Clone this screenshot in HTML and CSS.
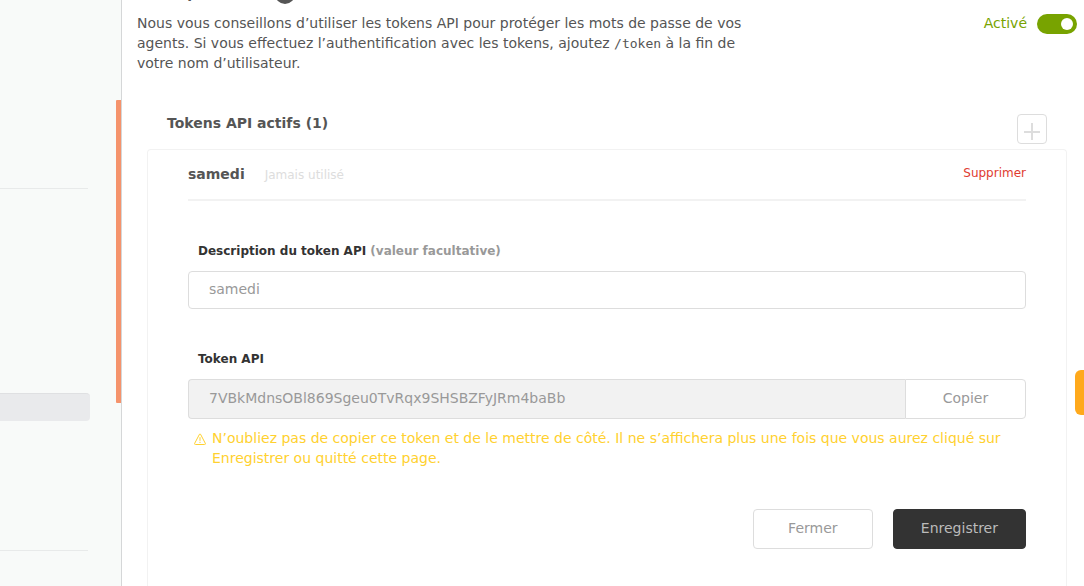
FILE: index.html
```html
<!DOCTYPE html>
<html lang="fr">
<head>
<meta charset="utf-8">
<title>Tokens API</title>
<link rel="stylesheet" href="styles.css">
</head>
<body>
<div class="shell">
  <aside class="sidebar">
    <div class="sidebar-nav">
      <div class="nav-group nav-first"></div>
      <div class="nav-group nav-main"><div class="nav-current"></div></div>
    </div>
    <div class="scroll-thumb"></div>
  </aside>
  <main class="content">
    <h2 class="section-title">Accès par token
      <svg class="info" viewBox="0 0 20 20" aria-hidden="true"><circle cx="10" cy="10" r="10"/></svg>
    </h2>
    <div class="intro">
      <p class="intro-text">Nous vous conseillons d’utiliser les tokens API pour protéger les mots de passe de vos agents. Si vous effectuez l’authentification avec les tokens, ajoutez <code>/token</code> à la fin de votre nom d’utilisateur.</p>
      <label class="switch">Activé <input class="switch-input" type="checkbox" checked></label>
    </div>
    <div class="list-head">
      <h3 class="list-title">Tokens API actifs (1)</h3>
      <button class="add" type="button" aria-label="Ajouter un token">
        <svg class="add-icon" viewBox="0 0 18 18" aria-hidden="true"><path d="M9 1v17M1 10h16"/></svg>
      </button>
    </div>
    <form class="card">
      <div class="card-head">
        <h4 class="token-name">samedi</h4>
        <span class="token-usage">Jamais utilisé</span>
        <button class="remove" type="button">Supprimer</button>
      </div>
      <label class="label" for="description">Description du token API <span class="optional">(valeur facultative)</span></label>
      <input class="field" id="description" type="text" value="samedi">
      <label class="label" for="token">Token API</label>
      <div class="copy-group">
        <input class="token-field" id="token" type="text" value="7VBkMdnsOBl869Sgeu0TvRqx9SHSBZFyJRm4baBb" readonly>
        <button class="copy" type="button">Copier</button>
      </div>
      <div class="warning">
        <svg class="warning-icon" viewBox="0 0 12 12" aria-hidden="true"><path d="M5.500 1.200 .7 10.300q-.5 1.200.7 1.200h9.200q1.200 0 .7-1.200L6.500 1.200q-.5-.7-1 0zM6 4.200v3.600M6 8.800v1.200"/></svg>
        <p class="warning-text">N’oubliez pas de copier ce token et de le mettre de côté. Il ne s’affichera plus une fois que vous aurez cliqué sur Enregistrer ou quitté cette page.</p>
      </div>
      <div class="actions">
        <button class="btn" type="button">Fermer</button>
        <button class="btn btn-primary" type="submit">Enregistrer</button>
      </div>
    </form>
  </main>
</div>
<div class="side-tab"></div>
</body>
</html>
```
FILE: styles.css
```css
* { box-sizing: border-box; }
html, body { height: 100%; }
body {
  margin: 0;
  overflow: hidden;
  background: #fff;
  color: #555;
  font: 14px/20px "DejaVu Sans", sans-serif;
}
h2, h3, h4, p { margin: 0; font-size: 14px; }
button, input { font: inherit; margin: 0; }
button { cursor: pointer; }

.shell { display: flex; height: 100%; overflow: hidden; }
.sidebar {
  display: flex;
  flex: none;
  width: 122px;
  background: #f8faf9;
  border-right: 1px solid #d5d7d8;
}
.sidebar-nav { flex: 1; }
.nav-group { width: 88px; border-bottom: 1px solid #e8eaea; }
.nav-first { height: 189px; }
.nav-main { height: 362px; padding-top: 204px; }
.nav-current {
  width: 90px;
  height: 28px;
  background: #e9eaec;
  border-top: 1px solid #dfe0e2;
  border-radius: 0 4px 4px 0;
}
.scroll-thumb {
  width: 5px;
  height: 303px;
  margin-top: 100px;
  background: #f5936c;
  border-radius: 1px 0 0 1px;
}

.content {
  display: flex;
  flex: 1;
  flex-direction: column;
  min-width: 0;
  padding: 0 17px 0 15px;
}
.section-title {
  display: flex;
  flex: none;
  align-items: flex-start;
  gap: 12px;
  height: 21px;
  margin-top: -17px;
}
.info { width: 20px; height: 20px; margin-top: 1px; fill: #555; }
.intro {
  display: flex;
  justify-content: space-between;
  align-items: flex-start;
  margin: 9px -10px 0 0;
}
.intro-text { flex: 0 1 610px; }
.intro-text code { font: 13px "DejaVu Sans Mono", monospace; }
.switch { display: flex; gap: 10px; color: #78a300; }
.switch-input {
  appearance: none;
  display: flex;
  width: 40px;
  height: 20px;
  margin-top: 1px;
  padding: 4px;
  justify-content: flex-start;
  background: #78a300;
  border-radius: 10px;
}
.switch-input::before {
  content: "";
  width: 12px;
  height: 12px;
  border-radius: 50%;
  background: #fff;
}
.switch-input:checked { justify-content: flex-end; }

.list-head {
  display: flex;
  justify-content: space-between;
  margin: 40px 20px 0 30px;
}
.add {
  display: flex;
  align-items: center;
  justify-content: center;
  width: 30px;
  height: 30px;
  margin-top: 1px;
  padding: 3px 0 0;
  background: #fff;
  border: 1px solid #ddd;
  border-radius: 4px;
}
.add-icon { width: 18px; height: 18px; fill: none; stroke: #ddd; stroke-width: 2; }

.card {
  flex: 1;
  margin: 5px 0 0 10px;
  padding: 0 40px;
  border: 1px solid #f2f2f2;
  border-bottom: 0;
  border-radius: 4px 4px 0 0;
}
.card-head {
  display: flex;
  align-items: center;
  gap: 20px;
  height: 51px;
  margin-bottom: 40px;
  border-bottom: 2px solid #f2f2f2;
}
.token-name { padding-bottom: 2px; }
.token-usage { color: #ddd; font-size: 12px; }
.remove {
  margin-left: auto;
  padding: 0 0 3px;
  border: 0;
  background: none;
  color: #e03b30;
  font-size: 12px;
}
.label {
  display: block;
  margin: 0 10px 10px;
  color: #333;
  font-size: 12px;
  font-weight: bold;
}
.optional { color: #999; }
.field, .token-field {
  display: block;
  width: 100%;
  padding: 0 20px 2px;
  border: 1px solid #ddd;
  border-radius: 4px;
  color: #999;
  outline: 0;
}
.field { height: 38px; margin-bottom: 40px; background: #fff; }
.copy-group { display: flex; height: 40px; }
.token-field {
  flex: 1;
  min-width: 0;
  border-right: 0;
  border-radius: 4px 0 0 4px;
  background: #f2f2f2;
}
.copy {
  width: 121px;
  padding: 0 0 2px;
  border: 1px solid #ddd;
  border-radius: 0 4px 4px 0;
  background: #fff;
  color: #999;
}
.warning { display: flex; gap: 6px; margin: 9px 0 0 6px; color: #ffd12f; }
.warning-icon {
  flex: none;
  width: 12px;
  height: 12px;
  margin-top: 5px;
  fill: none;
  stroke: currentColor;
}
.actions { display: flex; justify-content: flex-end; gap: 20px; margin-top: 41px; }
.btn {
  min-width: 120px;
  height: 40px;
  padding: 0 27px 2px;
  border: 1px solid #ddd;
  border-radius: 4px;
  background: #fff;
  color: #999;
}
.btn-primary { border-color: #333; background: #333; color: #bbb; }

.side-tab {
  position: absolute;
  top: 370px;
  right: 0;
  width: 9px;
  height: 45px;
  background: #ffa91c;
  border-radius: 6px 0 0 6px;
}
```
